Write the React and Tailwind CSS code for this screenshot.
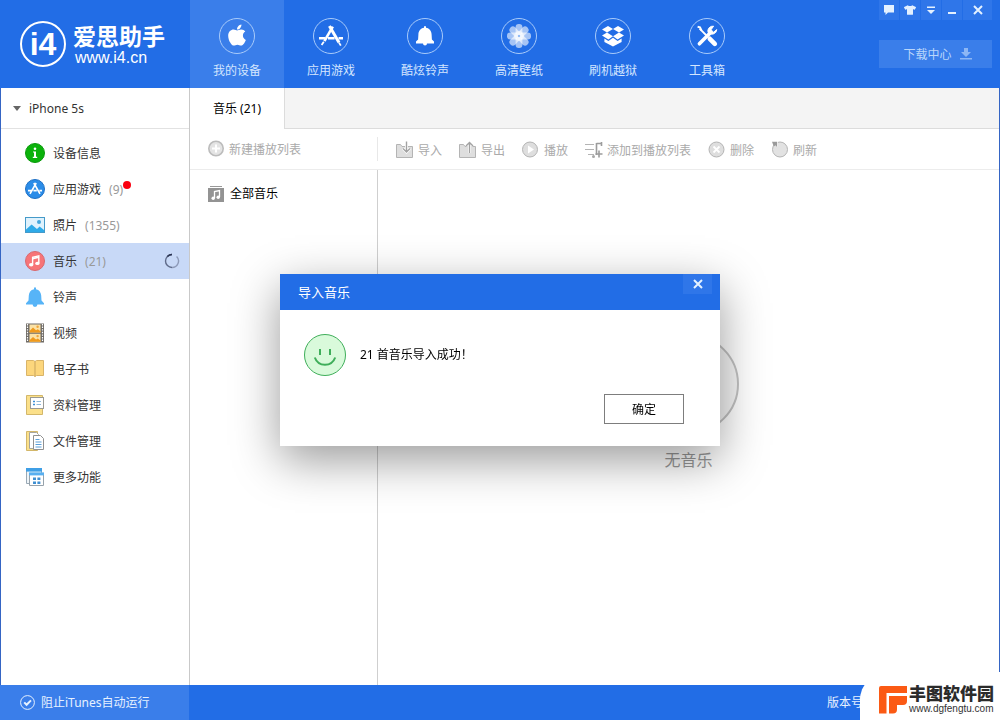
import React, { useState } from 'react';
import clsx from 'clsx';
import { FaApple, FaTshirt } from 'react-icons/fa';

/* ---------- top navigation icons ---------- */

function AppStoreMark() {
  return (
    <svg viewBox="0 0 26 26" className="w-[26px] h-[26px]" fill="none" stroke="currentColor" strokeWidth="2.6">
      <path d="M14.8 3.6 6.4 18.2" />
      <path d="M5.8 18.8 3.6 22" strokeWidth="1.8" />
      <path d="M11.4 3 21 19.4" strokeWidth="3" />
      <path d="m21 19.6 1.8 3" strokeWidth="1.8" />
      <path d="M1 15.2h6M10 15.2h6.6M20.6 15.2H25" strokeWidth="2.4" />
    </svg>
  );
}

function BellMark() {
  return (
    <svg viewBox="0 0 20 22" className="w-[20px] h-[22px]" fill="currentColor">
      <path d="M9 1.2h2v1.6c3.6.5 5.4 3.2 5.6 6.6l.3 5 2.1 2.2v1.8H12a2 2 0 0 1-4 0H1v-1.8l2.1-2.2.3-5C3.6 6 5.4 3.3 9 2.8z" />
    </svg>
  );
}

function FlowerMark() {
  const angles = [0, 45, 90, 135, 180, 225, 270, 315];
  return (
    <svg viewBox="0 0 26 26" className="w-[26px] h-[26px]" fill="currentColor">
      {angles.map((a) => (
        <rect key={a} x="9.6" y="1" width="6.8" height="11" rx="3.2" opacity="0.6" transform={`rotate(${a} 13 13)`} />
      ))}
      <circle cx="13" cy="13" r="5" opacity="0.55" />
      <circle cx="13" cy="13" r="1" fill="#8fb8f4" />
    </svg>
  );
}

function BoxMark() {
  return (
    <svg viewBox="0 0 24 22" className="w-[24px] h-[22px]" fill="currentColor">
      <path d="M7 1 12 4 6 7.6 1 4.4zM17 1l6 3.4-5 3.2L12 4zM1 10.6 6 7.6l6 3.6-4.6 3.2zM18 7.6l5 3-6.400 3.8L12 11.2z" />
      <path d="M3.4 13.6 7.4 16 12 12.8 16.6 16l4-2.4V17L12 21.4 3.4 17z" />
    </svg>
  );
}

function ToolsMark() {
  return (
    <svg viewBox="0 0 24 24" className="w-[24px] h-[24px]" fill="none" stroke="currentColor">
      <path d="M4.6 4.6 13 13" strokeWidth="1.8" />
      <path d="m2.6 2.8 2.4.6 1.6 3.2" strokeWidth="2" />
      <path d="m14.8 14.8 5 5" strokeWidth="4.6" strokeLinecap="round" />
      <path d="M4.4 19.8 15.6 8.6" strokeWidth="3.6" strokeLinecap="round" />
      <path
        d="M18.6 2.2A5 5 0 0 0 13 8.400a5 5 0 0 0 8.800-2.800l-3.200 2.600-2.600-2.400z"
        fill="currentColor"
        strokeWidth="1"
      />
    </svg>
  );
}

/* ---------- sidebar icons, all drawn on a 20px grid ---------- */

function SideIcon({ children }) {
  return (
    <svg viewBox="0 0 20 20" className="w-5 h-5 shrink-0" fill="none">
      {children}
    </svg>
  );
}

const infoIcon = (
  <SideIcon>
    <circle cx="10" cy="10" r="9.5" fill="#0bb20b" stroke="#0a9a0c" />
    <circle cx="10" cy="5.8" r="1.3" fill="#fff" />
    <path d="M8 8.4h3v5.4h1.2V15H7.8v-1.2H9V9.6H8z" fill="#fff" />
  </SideIcon>
);

const appsIcon = (
  <SideIcon>
    <circle cx="10" cy="10" r="9.5" fill="#2b8ce8" stroke="#1f70c4" />
    <g stroke="#fff" strokeWidth="1.6">
      <path d="M11.2 4 5 14.8M8.8 4 15 14.8M3 11.6h3.6M8.4 11.6h3.4M14.4 11.6H17" />
    </g>
  </SideIcon>
);

const photoIcon = (
  <SideIcon>
    <rect x=".5" y="2.5" width="19" height="15" fill="#dff2fd" stroke="#459ac9" />
    <path d="m1 14.5 5.6-5L12 14l2.6-2.4L19 15v2H1z" fill="#2eaae8" />
    <circle cx="14" cy="7" r="2" fill="#45a7dc" />
  </SideIcon>
);

const musicIcon = (
  <SideIcon>
    <circle cx="10" cy="10" r="9.5" fill="#f77478" stroke="#d8686e" />
    <path d="M7.6 13.4V6.2l6.2-1.4v7.2" stroke="#fff" strokeWidth="1.4" />
    <path d="M7.6 7.6 13.8 6.2" stroke="#fff" strokeWidth="1.6" />
    <ellipse cx="6.2" cy="13.8" rx="2.2" ry="1.7" fill="#fff" />
    <ellipse cx="12.4" cy="12.4" rx="2.2" ry="1.7" fill="#fff" />
  </SideIcon>
);

const ringIcon = (
  <SideIcon>
    <path
      d="M9 .5h2v1.7c3.4.6 5 3.2 5.2 6.4l.3 5 2.5 2.6v1.3h-6.6a2.4 2.4 0 0 1-4.8 0H1v-1.3l2.5-2.6.3-5C4 5.4 5.600 2.800 9 2.200z"
      fill="#57b4f7"
    />
  </SideIcon>
);

const videoIcon = (
  <SideIcon>
    <rect x="1" y=".5" width="18" height="19" fill="#6f6b66" />
    <path d="M2.5 1v18M17.5 1v18" stroke="#fff" strokeWidth="1.2" strokeDasharray="1.4 1.2" />
    <path d="M4.5 1.5h11v8h-11zM4.5 10.8h11v8h-11z" fill="#fbe2a6" />
    <path d="m4.5 8 3.5-3.4 3 2.6 1.8-1 2.7 2v1.3h-11zM4.5 17.3 8 13.9l3 2.6 1.8-1 2.7 2v1.3h-11z" fill="#f09a1c" />
    <circle cx="12.6" cy="3.8" r="1.2" fill="#f0a63a" />
    <circle cx="12.6" cy="13.1" r="1.2" fill="#f0a63a" />
  </SideIcon>
);

const bookIcon = (
  <SideIcon>
    <path d="M1.5 1.5h7l1.5 1 1.5-1h7v15h-7l-1.5 1-1.5-1h-7z" fill="#fcd67c" stroke="#d9b469" />
    <path d="M10 2.500v15" stroke="#c9a55e" />
  </SideIcon>
);

const dataIcon = (
  <SideIcon>
    <path d="M1.5.5h16v19h-16z" fill="#fbe08a" stroke="#d3b76a" />
    <rect x="5.5" y="2.5" width="13" height="11" fill="#fff" stroke="#9a9a94" />
    <path d="M8 6.5h2M8 9.5h2" stroke="#3c8fd6" strokeWidth="1.6" />
    <path d="M11.5 6.5H16M11.5 9.5H16" stroke="#8fb7d8" />
  </SideIcon>
);

const fileIcon = (
  <SideIcon>
    <path d="M1.5.5h11v19h-11z" fill="#fbe08a" stroke="#d3b76a" />
    <path d="M4.5 1.5h7l2 2v14h-9z" fill="#fff" stroke="#a5a5a0" />
    <path d="M8.5 4.5h7l3 3v11h-10z" fill="#fff" stroke="#909090" />
    <path d="M10.5 8.5h4M10.5 11h6M10.5 13.5h6M10.5 16h6" stroke="#5b9fd8" />
  </SideIcon>
);

const moreIcon = (
  <SideIcon>
    <path d="M1.5 1.5h15v15h-15z" fill="#eef4f8" stroke="#9aa9b5" />
    <path d="M1 1h16v3.6H1z" fill="#3f9fe6" />
    <path d="M4.5 6.5h14v12h-14z" fill="#fff" stroke="#97a2ab" />
    <path d="M4 5.4h15v3H4z" fill="#58aff0" />
    <path d="M8 10.500h3v2.600H8zM12.400 10.500h3v2.600h-3zM8 14.500h3v2.600H8zM12.400 14.500h3v2.600h-3z" fill="#3f8fd2" />
  </SideIcon>
);

/* ---------- toolbar icons ---------- */

function ToolIcon({ children }) {
  return (
    <svg viewBox="0 0 18 18" className="w-[18px] h-[18px] shrink-0" fill="none" stroke="#b4b4b4">
      {children}
    </svg>
  );
}

const plusTool = (
  <ToolIcon>
    <circle cx="8" cy="8.5" r="7.2" fill="#e4e4e4" stroke="#bcbcbc" strokeWidth="1.6" />
    <path d="M8 4.500v8M4 8.500h8" stroke="#fff" strokeWidth="2" />
  </ToolIcon>
);

const importTool = (
  <ToolIcon>
    <path d="M.5 3.5h4l1.5 2h10.500v11H.5z" fill="#dedede" />
    <path d="M10.5.5v10M7 7.500l3.500 3.500L14 7.500" stroke="#fff" strokeWidth="3" />
    <path d="M10.5.5v10M7 7.500l3.500 3.500L14 7.500" stroke="#a2a2a2" strokeWidth="1.4" />
  </ToolIcon>
);

const exportTool = (
  <ToolIcon>
    <path d="M.5 3.5h4l1.5 2h10.500v11H.5z" fill="#dedede" />
    <path d="M10.5 12V2M7 5l3.500-3.500L14 5" stroke="#fff" strokeWidth="3" />
    <path d="M10.5 12V2M7 5l3.500-3.500L14 5" stroke="#a2a2a2" strokeWidth="1.4" />
  </ToolIcon>
);

const playTool = (
  <ToolIcon>
    <circle cx="8" cy="8.5" r="7.500" fill="#dedede" />
    <path d="M6 4.500v8l6-4z" fill="#fff" stroke="none" />
  </ToolIcon>
);

const addTool = (
  <ToolIcon>
    <path d="M0 3.5h9M0 8.5h9M3 13.5h6" />
    <path d="M11.5 14V2M11.5 2.5h5M16.5 1v4" stroke="#9c9c9c" strokeWidth="1.6" />
    <path d="M14 9.500v7M10.500 13h7" stroke="#9c9c9c" strokeWidth="1.6" />
    <circle cx="8.5" cy="15.5" r="1.5" fill="#a8a8a8" stroke="none" />
  </ToolIcon>
);

const deleteTool = (
  <ToolIcon>
    <circle cx="8.5" cy="8.5" r="7.500" fill="#dedede" />
    <path d="m5.500 5.500 6 6M11.500 5.500l-6 6" stroke="#fff" strokeWidth="1.8" />
  </ToolIcon>
);

const refreshTool = (
  <ToolIcon>
    <circle cx="9" cy="8.5" r="7.500" fill="#e2e2e2" />
    <path d="M6.500 0v5.500L4 3z" fill="#fff" stroke="#fff" />
    <path d="M1 .800h5.200V6L4.400 4.200 2.800 5.400z" fill="#9a9a9a" stroke="none" />
  </ToolIcon>
);

const navItems = [
  { label: '我的设备', icon: <FaApple className="w-6 h-6 mb-[2px]" /> },
  { label: '应用游戏', icon: <AppStoreMark /> },
  { label: '酷炫铃声', icon: <BellMark /> },
  { label: '高清壁纸', icon: <FlowerMark /> },
  { label: '刷机越狱', icon: <BoxMark /> },
  { label: '工具箱', icon: <ToolsMark /> },
];

const sideItems = [
  { label: '设备信息', icon: infoIcon },
  { label: '应用游戏', icon: appsIcon, count: 9, dot: true },
  { label: '照片', icon: photoIcon, count: 1355 },
  { label: '音乐', icon: musicIcon, count: 21, busy: true },
  { label: '铃声', icon: ringIcon },
  { label: '视频', icon: videoIcon },
  { label: '电子书', icon: bookIcon },
  { label: '资料管理', icon: dataIcon },
  { label: '文件管理', icon: fileIcon },
  { label: '更多功能', icon: moreIcon },
];

const tools = [
  { label: '导入', icon: importTool },
  { label: '导出', icon: exportTool },
  { label: '播放', icon: playTool },
  { label: '添加到播放列表', icon: addTool },
  { label: '删除', icon: deleteTool },
  { label: '刷新', icon: refreshTool },
];

function CloseMark() {
  return (
    <svg viewBox="0 0 10 10" className="w-[10px] h-[10px]" stroke="currentColor" strokeWidth="2">
      <path d="m1 1 8 8M9 1 1 9" />
    </svg>
  );
}

function WindowButtons() {
  const btn = 'flex items-center justify-center flex-1 h-5 bg-[#2f76e9] text-[#e4f1ff]';
  return (
    <div className="flex gap-px">
      <button className={btn} aria-label="反馈">
        <svg viewBox="0 0 10 10" className="w-[10px] h-[10px]" fill="currentColor">
          <path d="M0 0h10v7.5H4L1.500 10V7.500H0z" />
        </svg>
      </button>
      <button className={btn} aria-label="皮肤">
        <FaTshirt className="w-3 h-3" />
      </button>
      <button className={btn} aria-label="菜单">
        <svg viewBox="0 0 10 10" className="w-[10px] h-[10px]" fill="currentColor">
          <path d="M1 1.5h8V3H1zM1 5h8L5 9z" />
        </svg>
      </button>
      <button className={btn} aria-label="最小化">
        <svg viewBox="0 0 10 10" className="w-[10px] h-[10px]" fill="currentColor">
          <path d="M1 7h8v2H1z" />
        </svg>
      </button>
      <button className="flex items-center justify-center w-[29px] h-5 bg-[#2f76e9] text-[#e4f1ff]" aria-label="关闭">
        <CloseMark />
      </button>
    </div>
  );
}

function Header({ active, onSelect }) {
  return (
    <header className="flex h-[88px] bg-[#226de6] text-white">
      <a href="#home" className="flex items-center gap-[7px] w-[190px] pl-5">
        <span className="flex items-center justify-center w-[46px] h-[46px] rounded-full border-2 border-white font-['Liberation_Sans'] text-[32px] leading-8 font-bold">
          i4
        </span>
        <span>
          <span className="block text-[23px] leading-7 font-bold">爱思助手</span>
          <span className="block pl-[2px] font-['Liberation_Sans'] text-base leading-4">www.i4.cn</span>
        </span>
      </a>

      <nav className="flex">
        {navItems.map((item) => (
          <button
            key={item.label}
            onClick={() => onSelect(item.label)}
            className={clsx(
              'flex flex-col items-center w-[94px] pt-[18px] gap-2',
              active === item.label && 'bg-[#3a7eea]'
            )}
          >
            <span className="flex items-center justify-center w-9 h-9 rounded-full border border-[#a9cbfa]">
              {item.icon}
            </span>
            <span className="text-[#d4e6ff] leading-[18px]">{item.label}</span>
          </button>
        ))}
      </nav>

      <div className="ml-auto mr-2 w-[113px]">
        <WindowButtons />
        <button className="flex items-center justify-center gap-2 w-full h-7 mt-5 pl-1 bg-[#3a7eea] text-[#b9d6fb]">
          <span className="pt-px">下载中心</span>
          <svg viewBox="0 0 12 12" className="w-3 h-3" fill="#8db7f5">
            <path d="M4 0h4v4h3L6 9 1 4h3zM0 10h12v1.500H0z" />
          </svg>
        </button>
      </div>
    </header>
  );
}

function Sidebar({ active, onSelect }) {
  return (
    <aside className="w-[189px] shrink-0 border-r border-[#c9c9c9]">
      <button className="flex items-center gap-2 w-full h-[41px] pl-3 border-b border-[#e2e2e2] text-[#333]">
        <svg viewBox="0 0 8 5" className="w-2 h-[5px]" fill="#666">
          <path d="M0 0h8L4 5z" />
        </svg>
        <span className="pt-px">iPhone 5s</span>
      </button>
      <nav className="pt-[6px]">
        {sideItems.map((item) => (
          <a
            key={item.label}
            href="#device"
            onClick={() => onSelect(item.label)}
            className={clsx(
              'flex items-center h-9 pl-6 pr-[9px] text-[#333]',
              active === item.label && 'bg-[#c8d9f7]'
            )}
          >
            {item.icon}
            <span className="ml-2 pt-px">{item.label}</span>
            {item.count && (
              <span className="relative ml-2 pt-px text-[#999]">
                ({item.count})
                {item.dot && <i className="absolute top-0 -right-2 w-2 h-2 rounded-full bg-[#fa0010]" />}
              </span>
            )}
            {item.busy && (
              <svg viewBox="0 0 16 16" className="w-4 h-4 ml-auto" fill="none" strokeWidth="1.4">
                <path d="M8 1.5A6.500 6.500 0 0 0 8 14.500" stroke="#5f6b8a" />
                <path d="M8 14.500A6.500 6.500 0 0 0 12.600 3.400" stroke="#8d9ab8" />
                <path d="M3.400 3.400A6.500 6.500 0 0 1 8 1.500" stroke="#2c3654" />
              </svg>
            )}
          </a>
        ))}
      </nav>
    </aside>
  );
}

function MusicPanel() {
  return (
    <main className="flex flex-col flex-1 min-w-0">
      <div className="flex h-[41px]">
        <button className="w-[94px] text-black">音乐 (21)</button>
        <div className="flex-1 bg-[#f4f4f4] border-l border-b border-[#dcdcdc]" />
      </div>

      <div className="flex items-center h-[41px] border-b border-[#ececec] text-[#aaa]">
        <div className="flex items-center w-[188px] h-6 pl-[18px] border-r border-[#e8e8e8]">
          <button className="flex items-center gap-[3px]">
            {plusTool}
            <span className="pt-px">新建播放列表</span>
          </button>
        </div>
        <div className="flex gap-[17px] pt-[2px] pl-[18px]">
          {tools.map((tool) => (
            <button key={tool.label} className="flex items-center gap-1">
              {tool.icon}
              <span className="pt-px">{tool.label}</span>
            </button>
          ))}
        </div>
      </div>

      <div className="flex flex-1">
        <div className="w-[188px] pt-3 pl-[18px] border-r border-[#cfcfcf]">
          <button className="flex items-center gap-[6px] h-6 text-black">
            <svg viewBox="0 0 16 16" className="w-4 h-4" fill="none">
              <path d="M2 .5h12" stroke="#999" />
              <path d="M0 2h16v14H0z" fill="#939393" />
              <path d="M6.500 12V5.500l5-1V11" stroke="#fff" strokeWidth="1.3" />
              <circle cx="5.2" cy="12.2" r="1.7" fill="#fff" />
              <circle cx="10.2" cy="11.2" r="1.7" fill="#fff" />
            </svg>
            全部音乐
          </button>
        </div>
        <div className="flex flex-col items-center justify-center flex-1 gap-[14px] pb-[50px]">
          <div className="w-[100px] h-[100px] rounded-full border-2 border-[#c2c2c2] bg-[#f6f6f6]" />
          <p className="text-base leading-6 text-[#999]">无音乐</p>
        </div>
      </div>
    </main>
  );
}

function ImportDialog({ onClose }) {
  return (
    <div className="fixed inset-0 z-20 flex items-center justify-center">
      <div
        role="dialog"
        aria-labelledby="dialog-title"
        className="w-[440px] bg-white shadow-[0_14px_44px_0_rgba(0,0,0,0.4)]"
      >
        <div className="flex items-start justify-between h-9 pl-[18px] pr-2 bg-[#226de6] text-white">
          <h2 id="dialog-title" className="text-[13px] leading-9">导入音乐</h2>
          <button
            onClick={onClose}
            aria-label="关闭"
            className="flex items-center justify-center w-[29px] h-5 bg-[#2f76e9] text-[#e4f1ff]"
          >
            <CloseMark />
          </button>
        </div>
        <div className="flex items-center gap-[14px] px-6 pt-6 text-black">
          <svg viewBox="0 0 42 42" className="w-[42px] h-[42px]" fill="none" stroke="#3fae5a">
            <circle cx="21" cy="21" r="20.5" fill="#d9fadb" />
            <path d="M16 15v6M26 15v6" strokeWidth="2" />
            <path d="M10.8 23.5c3.400 9.600 17 9.600 20.400 0" strokeWidth="2" />
          </svg>
          <p>21 首音乐导入成功！</p>
        </div>
        <div className="flex justify-end pt-[18px] pb-[22px] pr-9">
          <button onClick={onClose} className="w-20 h-[30px] pt-px border border-[#7d7d7d] text-black">
            确定
          </button>
        </div>
      </div>
    </div>
  );
}

function Footer() {
  return (
    <footer className="flex h-[35px] bg-[#226de6] text-[#e6f1ff]">
      <button className="flex items-center gap-[6px] w-[189px] pl-5 bg-[#3a7eea]">
        <svg viewBox="0 0 15 15" className="w-[15px] h-[15px]" fill="none" stroke="currentColor">
          <circle cx="7.5" cy="7.5" r="6.9" />
          <path d="m4.200 7.400 2.400 2.400L11 5.400" strokeWidth="2" />
        </svg>
        阻止iTunes自动运行
      </button>
      <span className="ml-auto mr-[137px] pt-px self-center">版本号</span>
    </footer>
  );
}

function SiteBadge() {
  return (
    <div className="absolute right-0 bottom-0 z-10 flex items-center w-[140px] h-12 pt-2 pl-[19px] gap-[2px] rounded-tl-[28px] bg-white">
      <svg viewBox="0 0 28 28" className="w-7 h-7 shrink-0" fill="#fb5a14">
        <path d="M2 0h26v7H7.500v20.500H0V2a2 2 0 0 1 2-2z" />
        <path d="M10 10h18v5a4 4 0 0 1-4 4h-6v4.500a4 4 0 0 1-4 4h-4z" />
      </svg>
      <div className="whitespace-nowrap">
        <p className="text-[17px] leading-[18px] font-black text-[#2b2b2b]">丰图软件园</p>
        <p className="font-['Liberation_Sans'] text-[10px] leading-3 text-[#333]">www.dgfengtu.com</p>
      </div>
    </div>
  );
}

export default function App() {
  const [section, setSection] = useState('我的设备');
  const [category, setCategory] = useState('音乐');
  const [dialogOpen, setDialogOpen] = useState(true);

  return (
    <div className="relative flex flex-col min-h-screen bg-white font-['Noto_Sans','Noto_Sans_CJK_SC',sans-serif] text-xs">
      <Header active={section} onSelect={setSection} />
      <div className="flex flex-1 border-x border-[#3565c4]">
        <Sidebar active={category} onSelect={setCategory} />
        <MusicPanel />
      </div>
      <Footer />
      <SiteBadge />
      {dialogOpen && <ImportDialog onClose={() => setDialogOpen(false)} />}
    </div>
  );
}
